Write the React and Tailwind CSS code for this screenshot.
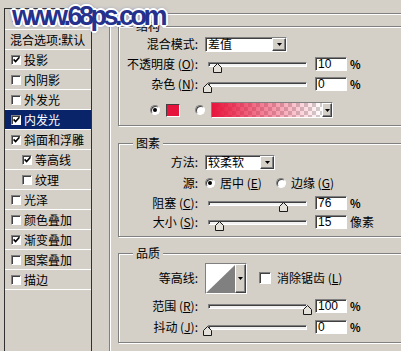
import React from 'react';

const CJK = "font-['Noto_Sans_CJK_SC',sans-serif]";
const sunken = 'border border-[#808080] border-b-white border-r-white shadow-[inset_1px_1px_0_#404040]';
const raised = 'border border-white border-b-[#404040] border-r-[#404040] shadow-[inset_-1px_-1px_0_#808080]';

const effects = [
    { label: '投影', checked: true },
    { label: '内阴影' },
    { label: '外发光' },
    { label: '内发光', checked: true, active: true },
    { label: '斜面和浮雕', checked: true },
    { label: '等高线', checked: true, sub: true },
    { label: '纹理', sub: true },
    { label: '光泽' },
    { label: '颜色叠加' },
    { label: '渐变叠加', checked: true },
    { label: '图案叠加' },
    { label: '描边' },
];

const Check = ({ checked, size = 'h-[10px] w-[10px]' }) => (
    <span className={`flex ${size} shrink-0 items-center justify-center bg-white ${sunken}`}>
        {checked && (
            <svg width="7" height="7" viewBox="0 0 7 7">
                <path d="M0.6 3.4 L2.6 5.5 L6.4 1.2" fill="none" stroke="#000" strokeWidth="1.6" />
            </svg>
        )}
    </span>
);

const Radio = ({ on }) => (
    <span className={`flex h-[10px] w-[10px] shrink-0 items-center justify-center rounded-full bg-white ${sunken}`}>
        {on && <span className="h-[4px] w-[4px] rounded-full bg-black" />}
    </span>
);

const Arrow = () => (
    <svg width="5" height="3" viewBox="0 0 5 3">
        <path d="M0 0 H5 L2.5 3 Z" fill="#000" />
    </svg>
);

const Select = ({ value, width }) => (
    <div className={`flex h-[15px] ${width} shrink-0 items-center bg-white ${sunken}`}>
        <span className="flex-1 pl-[2px] text-[12px] leading-none">{value}</span>
        <span className={`flex h-full w-[14px] items-center justify-center bg-[#d4d0c8] ${raised}`}>
            <Arrow />
        </span>
    </div>
);

const Slider = ({ value }) => (
    <div className="relative flex h-full w-[110px] shrink-0 items-center">
        <div className={`ml-[3px] h-[5px] w-[99px] bg-[#f2f2f2] ${sunken}`} />
        <svg className="absolute top-1/2 mt-[-1px]" style={{ left: value + 2 - 4.5 }} width="9" height="10" viewBox="0 0 9 10">
            <path d="M4.5 0.5 L8.5 4.5 V9.5 H0.5 V4.5 Z" fill="#e4e1da" stroke="#1a1a1a" strokeWidth="1" />
        </svg>
    </div>
);

const NumBox = ({ value, unit = '%' }) => (
    <div className="flex items-center">
        <div className={`flex h-[14px] w-[32px] items-center bg-white pl-[2px] font-['Liberation_Sans',sans-serif] text-[12px] leading-none ${sunken}`}>
            {value}
        </div>
        <span className={`ml-[3px] text-[11px] leading-none ${unit === '%' ? 'font-bold' : 'text-[12px]'}`}>{unit}</span>
    </div>
);

const Key = ({ k }) => (
    <span>
        {' ('}
        <span className="underline">{k}</span>
        {')'}
    </span>
);

const Label = ({ children }) => (
    <span className="w-[79px] shrink-0 whitespace-nowrap text-right text-[12px] leading-none">{children}</span>
);

const Row = ({ h, label, children, className = '' }) => (
    <div className={`flex ${h} items-center ${className}`}>
        <Label>{label}</Label>
        <div className="ml-[7px] flex h-full items-center">{children}</div>
    </div>
);

const Group = ({ title, className = '', children }) => (
    <div className={`relative w-[320px] shrink-0 border border-[#808080] shadow-[inset_1px_1px_0_#fff,1px_1px_0_#fff] ${className}`}>
        <span className="absolute top-[-8px] left-[14px] bg-[#d4d0c8] px-[3px] text-[12px] leading-[14px]">{title}</span>
        {children}
    </div>
);

export default function App() {
    return (
        <div className={`relative flex h-[351px] w-[401px] items-start overflow-hidden bg-[#d4d0c8] text-black ${CJK}`}>
            {/* style list */}
            <div className="mt-[8px] ml-[4px] h-[400px] w-[88px] shrink-0 border-t border-l border-r border-[#303030]">
                <div className="flex h-[21px] items-center border-b border-white pl-[7px] text-[12px] leading-none">样式</div>
                <div className="flex h-[20px] items-center border-b border-white pl-[5px] text-[12px] leading-none whitespace-nowrap">混合选项:默认</div>
                {effects.map(e => (
                    <div
                        key={e.label}
                        className={`flex h-[20px] items-center border-b border-white text-[12px] leading-none ${e.sub ? 'pl-[17px]' : 'pl-[6px]'} ${e.active ? 'bg-[#0a246a] text-white' : ''}`}
                    >
                        <Check checked={e.checked} />
                        <span className="ml-[3px] whitespace-nowrap">{e.label}</span>
                    </div>
                ))}
            </div>

            {/* inner glow settings */}
            <div className="mt-[13px] ml-[17px] h-[400px] w-[400px] shrink-0 border-t border-l border-[#808080] pt-[12px] pl-[8px] shadow-[inset_1px_1px_0_#fff]">
                <Group title="结构" className="h-[100px] pt-[7px]">
                    <Row h="h-[20px]" label="混合模式:">
                        <Select value="差值" width="w-[82px]" />
                    </Row>
                    <Row h="h-[20px]" label={<>不透明度<Key k="O" />:</>}>
                        <Slider value={10} />
                        <NumBox value="10" />
                    </Row>
                    <Row h="h-[20px]" label={<>杂色<Key k="N" />:</>}>
                        <Slider value={0} />
                        <NumBox value="0" />
                    </Row>
                    <div className="mt-[6px] flex h-[20px] items-center pl-[31px]">
                        <Radio on />
                        <span className="ml-[6px] h-[13px] w-[14px] border border-[#404040] border-b-white border-r-white bg-[#e6133c]" />
                        <span className="ml-[15px]"><Radio /></span>
                        <div className={`ml-[6px] flex h-[16px] w-[122px] ${sunken}`}>
                            <span className="flex-1 [background-image:linear-gradient(to_right,#e8143c,#e8143c00),repeating-conic-gradient(#cfcfcf_0%_25%,#ffffff_0%_50%)] [background-size:100%_100%,8px_8px]" />
                            <span className={`flex w-[10px] items-center justify-center bg-[#d4d0c8] ${raised}`}>
                                <Arrow />
                            </span>
                        </div>
                    </div>
                </Group>

                <Group title="图素" className="mt-[17px] h-[94px] pt-[8px]">
                    <Row h="h-[20px]" label="方法:">
                        <Select value="较柔软" width="w-[70px]" />
                    </Row>
                    <Row h="h-[22px]" label="源:">
                        <Radio on />
                        <span className="ml-[5px] text-[12px] leading-none whitespace-nowrap">居中<Key k="E" /></span>
                        <span className="ml-[14px]"><Radio /></span>
                        <span className="ml-[5px] text-[12px] leading-none whitespace-nowrap">边缘<Key k="G" /></span>
                    </Row>
                    <Row h="h-[18px]" label={<>阻塞<Key k="C" />:</>}>
                        <Slider value={76} />
                        <NumBox value="76" />
                    </Row>
                    <Row h="h-[20px]" label={<>大小<Key k="S" />:</>}>
                        <Slider value={12} />
                        <NumBox value="15" unit="像素" />
                    </Row>
                </Group>

                <Group title="品质" className="mt-[16px] h-[90px] pt-[8px]">
                    <Row h="h-[32px]" label="等高线:">
                        <div className={`flex h-[31px] w-[42px] ${sunken}`}>
                            <svg width="29" height="29" viewBox="0 0 29 29" className="shrink-0">
                                <rect width="29" height="29" fill="#fff" />
                                <path d="M0 29 L29 1 V29 Z" fill="#808080" />
                            </svg>
                            <span className={`flex flex-1 items-center justify-center bg-[#d4d0c8] ${raised}`}>
                                <Arrow />
                            </span>
                        </div>
                        <span className="ml-[12px]"><Check size="h-[12px] w-[12px]" /></span>
                        <span className="ml-[6px] text-[12px] leading-none whitespace-nowrap">消除锯齿<Key k="L" /></span>
                    </Row>
                    <Row h="h-[20px]" label={<>范围<Key k="R" />:</>} className="mt-[2px]">
                        <Slider value={100} />
                        <NumBox value="100" />
                    </Row>
                    <Row h="h-[20px]" label={<>抖动<Key k="J" />:</>} className="mt-[1px]">
                        <Slider value={0} />
                        <NumBox value="0" />
                    </Row>
                </Group>
            </div>

            {/* watermark */}
            <div className="pointer-events-none absolute top-[0px] left-[12px] font-['Liberation_Sans',Arial,sans-serif] text-[27px] leading-[32px] font-bold tracking-[-3.5px] text-[#25318c] [text-shadow:1px_1px_0_#fff,-1px_-1px_0_#fff,1px_-1px_0_#fff,-1px_1px_0_#fff,0_2px_0_#fff,0_-2px_0_#fff,2px_0_0_#fff,-2px_0_0_#fff,0_0_4px_#4a5aa8]">
                www.68ps.com
            </div>
        </div>
    );
}
